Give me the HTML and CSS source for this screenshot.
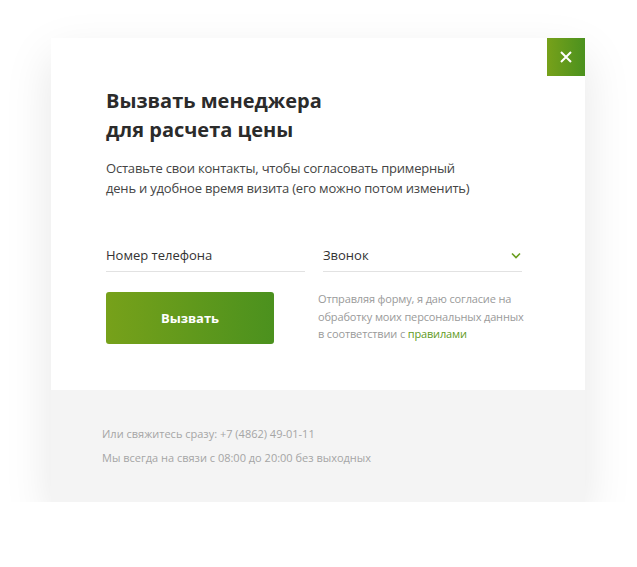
FILE: index.html
```html
<!DOCTYPE html>
<html lang="ru">
<head>
<meta charset="utf-8">
<link rel="stylesheet" href="styles.css">
</head>
<body>
<div class="page">
  <div class="modal">
    <button class="close" aria-label="Закрыть">
      <svg width="14" height="14" viewBox="0 0 14 14"><path d="M2 2L12 12M12 2L2 12" stroke="#fff" stroke-width="2" fill="none"/></svg>
    </button>
    <div class="main">
      <h1 class="title">Вызвать менеджера<br>для расчета цены</h1>
      <p class="lead">Оставьте свои контакты, чтобы согласовать примерный<br>день и удобное время визита (его можно потом изменить)</p>
      <div class="fields">
        <div class="field">Номер телефона</div>
        <div class="field select">Звонок
          <svg class="chev" width="10" height="7" viewBox="0 0 10 7"><path d="M1 1.5L5 5.5L9 1.5" stroke="#6a9e1f" stroke-width="1.6" fill="none"/></svg>
        </div>
      </div>
      <div class="actions">
        <button class="submit">Вызвать</button>
        <p class="consent">Отправляя форму, я даю согласие на<br>обработку моих персональных данных<br>в соответствии с <a href="#">правилами</a></p>
      </div>
    </div>
    <div class="footer">
      <p>Или свяжитесь сразу: +7 (4862) 49-01-11</p>
      <p>Мы всегда на связи с 08:00 до 20:00 без выходных</p>
    </div>
  </div>
</div>
</body>
</html>
```
FILE: styles.css
```css
* { box-sizing: border-box; }
html, body { margin: 0; padding: 0; background: #fff; }
body { font-family: "Open Sans", "Liberation Sans", sans-serif; color: #333; }
.page { padding: 38px 0 0 51px; }
.modal {
  position: relative;
  width: 534px;
  background: #fff;
  box-shadow: 0 18px 45px rgba(0,0,0,0.1);
}
.close {
  position: absolute;
  top: 0; right: 0;
  width: 38px; height: 38px;
  border: 0; padding: 0;
  background: linear-gradient(90deg, #77a11a, #4b911e);
  display: flex; align-items: center; justify-content: center;
}
.main { height: 352px; padding: 48px 63px 0 55px; }
.title {
  margin: 0;
  font-size: 20px;
  line-height: 29px;
  font-weight: 700;
  color: #2b2b2b;
}
.lead {
  margin: 14px 0 0;
  font-size: 13px;
  line-height: 20px;
  letter-spacing: -0.2px;
  color: #444;
}
.fields { display: flex; gap: 18px; margin-top: 47px; }
.field {
  flex: 1;
  font-size: 13px;
  line-height: 20px;
  padding: 0 0 6px 0;
  border-bottom: 1px solid #e2e2e2;
  color: #333;
}
.select { display: flex; justify-content: space-between; align-items: center; }
.chev { margin-right: 1px; }
.actions { display: flex; align-items: flex-start; gap: 44px; margin-top: 20px; }
.submit {
  flex: none;
  width: 168px; height: 52px;
  border: 0; border-radius: 3px;
  background: linear-gradient(90deg, #77a11a, #4b911e);
  color: #fff;
  font-family: inherit;
  font-size: 13px;
  font-weight: 700;
}
.consent {
  margin: -2px 0 0;
  font-size: 11px;
  line-height: 17.5px;
  letter-spacing: -0.15px;
  color: #9a9a9a;
  white-space: nowrap;
}
.consent a { color: #5f9a1c; text-decoration: none; }
.footer {
  height: 112px;
  background: #f4f4f4;
  padding: 35px 0 0 51px;
}
.footer p {
  margin: 0 0 7px;
  font-size: 11px;
  line-height: 17px;
  color: #a5a5a5;
}
```
